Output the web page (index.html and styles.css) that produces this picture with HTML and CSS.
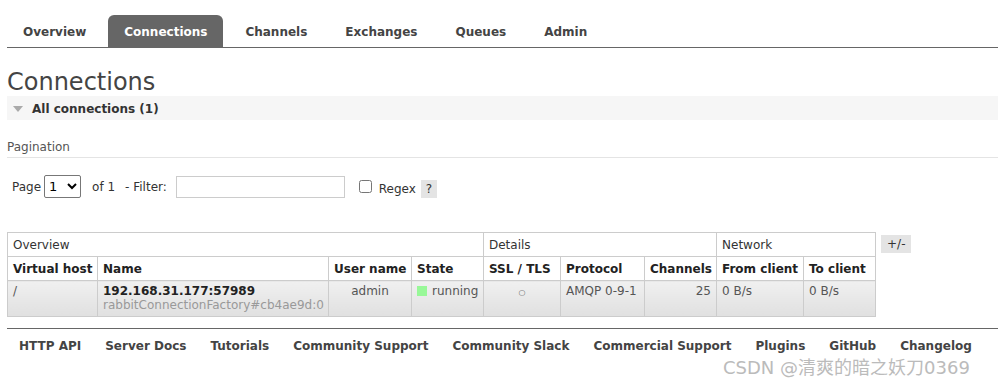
FILE: index.html
```html
<!DOCTYPE html>
<html lang="en">

<head>
    <meta charset="UTF-8">
    <title>Connections</title>
    <link rel="stylesheet" href="styles.css">
</head>

<body>

    <ul class="tabs">
        <li><a href="#">Overview</a></li>
        <li class="selected"><a href="#">Connections</a></li>
        <li><a href="#">Channels</a></li>
        <li><a href="#">Exchanges</a></li>
        <li><a href="#">Queues</a></li>
        <li><a href="#">Admin</a></li>
    </ul>

    <h1>Connections</h1>

    <div class="section">
        <h2><span class="arrow"></span>All connections (1)</h2>

        <h3>Pagination</h3>
        <div class="filter">
            <label>Page</label>
            <select class="page-select">
                <option>1</option>
            </select>
            <span class="of">of 1</span>
            <label>- Filter:</label>
            <input type="text" class="filter-text">
            <input type="checkbox" class="regex-check">
            <label class="regex">Regex</label>
            <span class="help">?</span>
        </div>

        <div class="table-wrap">
            <table class="list">
                <colgroup>
                    <col style="width: 90px">
                    <col style="width: 231px">
                    <col style="width: 83px">
                    <col style="width: 72px">
                    <col style="width: 77px">
                    <col style="width: 84px">
                    <col style="width: 72px">
                    <col style="width: 87px">
                    <col style="width: 72px">
                </colgroup>
                <thead>
                    <tr class="group">
                        <th colspan="4">Overview</th>
                        <th colspan="3">Details</th>
                        <th colspan="2">Network</th>
                    </tr>
                    <tr>
                        <th>Virtual host</th>
                        <th>Name</th>
                        <th>User name</th>
                        <th>State</th>
                        <th>SSL / TLS</th>
                        <th>Protocol</th>
                        <th>Channels</th>
                        <th>From client</th>
                        <th>To client</th>
                    </tr>
                </thead>
                <tbody>
                    <tr>
                        <td>/</td>
                        <td>
                            <span class="conn-name">192.168.31.177:57989</span>
                            <sub>rabbitConnectionFactory#cb4ae9d:0</sub>
                        </td>
                        <td class="c">admin</td>
                        <td><span class="state-dot"></span>running</td>
                        <td class="c"><span class="ssl">&#9675;</span></td>
                        <td>AMQP 0-9-1</td>
                        <td class="r">25</td>
                        <td>0 B/s</td>
                        <td>0 B/s</td>
                    </tr>
                </tbody>
            </table>
            <span class="toggle">+/-</span>
        </div>
    </div>

    <ul class="footer">
        <li><a href="#">HTTP API</a></li>
        <li><a href="#">Server Docs</a></li>
        <li><a href="#">Tutorials</a></li>
        <li><a href="#">Community Support</a></li>
        <li><a href="#">Community Slack</a></li>
        <li><a href="#">Commercial Support</a></li>
        <li><a href="#">Plugins</a></li>
        <li><a href="#">GitHub</a></li>
        <li><a href="#">Changelog</a></li>
    </ul>

    <div class="watermark">CSDN @清爽的暗之妖刀0369</div>

</body>

</html>
```

FILE: styles.css
```css
body {
    font-family: "DejaVu Sans", Verdana, sans-serif;
    font-size: 12px;
    color: #484848;
    background-color: #fff;
    margin: 0;
    padding: 0 0 0 7px;
}

a {
    color: #444;
    text-decoration: none;
}

/* top navigation */
.tabs {
    list-style: none;
    display: flex;
    gap: 6px;
    margin: 0;
    padding: 15px 0 0 0;
    border-bottom: 1px solid #666;
}

.tabs li a {
    display: block;
    padding: 1px 16px 0;
    height: 31px;
    line-height: 32px;
    font-size: 12px;
    font-weight: bold;
    border-radius: 6px 6px 0 0;
}

.tabs li.selected a {
    background-color: #666;
    color: #fff;
}

h1 {
    font-size: 24px;
    font-weight: normal;
    color: #444;
    margin: 21px 0 0 0;
    line-height: 27px;
}

.section h2 {
    display: flex;
    align-items: center;
    margin: 0;
    height: 23px;
    padding-top: 1px;
    background-color: #f6f6f6;
    font-size: 12px;
    color: #333;
    padding-left: 6px;
}

.arrow {
    width: 0;
    height: 0;
    border-left: 5px solid transparent;
    border-right: 5px solid transparent;
    border-top: 6px solid #aaa;
    margin-right: 9px;
}

.section h3 {
    font-size: 12px;
    font-weight: normal;
    color: #555;
    margin: 20px 0 0 0;
    padding-bottom: 3px;
    border-bottom: 1px solid #e4e4e4;
}

.filter {
    display: flex;
    align-items: center;
    padding: 17px 0 0 5px;
    font-size: 12px;
    color: #333;
}

.page-select {
    width: 37px;
    height: 23px;
    margin: 0 11px 0 3px;
    font-family: inherit;
    font-size: 13px;
    border: 1px solid #777;
    border-radius: 2px;
    background: #fff;
}

.of {
    margin-right: 10px;
}

.filter-text {
    width: 165px;
    height: 18px;
    margin: 0 0 0 9px;
    border: 1px solid #ccc;
    padding: 1px;
}

.regex-check {
    margin: 0 0 0 14px;
    width: 13px;
    height: 13px;
}

.regex {
    margin: 5px 0 0 7px;
}

.help {
    margin: 5px 0 0 5px;
    background-color: #e4e4e4;
    padding: 2px 5px;
}

/* connections table */
.table-wrap {
    display: flex;
    align-items: flex-start;
    margin-top: 34px;
}

.list {
    border-collapse: collapse;
    table-layout: fixed;
    width: 868px;
    font-size: 12px;
}

.list th,
.list td {
    border: 1px solid #ccc;
    padding: 0 5px;
    text-align: left;
    white-space: nowrap;
    overflow: hidden;
}

.list th {
    height: 23px;
    font-size: 12px;
    color: #222;
}

.list tr.group th {
    font-weight: normal;
    font-size: 12px;
    color: #333;
}

.list td {
    vertical-align: top;
    height: 32px;
    padding-top: 3px;
    color: #555;
    background: linear-gradient(#f0f0f0, #e0e0e0);
}

.list td.c {
    text-align: center;
}

.list td.r {
    text-align: right;
}

.conn-name {
    display: block;
    font-weight: bold;
    color: #222;
    font-size: 12px;
}

.list sub {
    display: block;
    vertical-align: baseline;
    font-size: 12px;
    color: #999;
    line-height: 15px;
}

.ssl {
    font-size: 8px;
    color: #666;
}

.state-dot {
    display: inline-block;
    width: 10px;
    height: 10px;
    background-color: #98f898;
    margin-right: 5px;
    vertical-align: -1px;
}

.toggle {
    margin: 3px 0 0 5px;
    background-color: #e4e4e4;
    padding: 2px 6px;
    color: #333;
}

/* footer links */
.footer {
    list-style: none;
    display: flex;
    gap: 24px;
    margin: 11px 0 0 0;
    padding: 10px 0 0 12px;
    border-top: 1px solid #666;
}

.footer li {
    flex-shrink: 0;
    white-space: nowrap;
}

.footer a {
    font-size: 12px;
    font-weight: bold;
}

.watermark {
    position: absolute;
    left: 723px;
    top: 353px;
    font-family: "DejaVu Sans", "Noto Sans CJK SC", sans-serif;
    font-size: 18px;
    color: #bbb;
    text-shadow: 1px 1px 1px #fff;
}
```
